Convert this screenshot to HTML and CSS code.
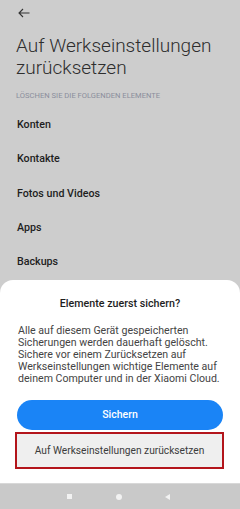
FILE: index.html
```html
<!DOCTYPE html>
<html lang="de">
<head>
<meta charset="utf-8">
<link rel="stylesheet" href="styles.css">
</head>
<body>
<div class="screen">
  <div class="main">
    <div class="topbar">
      <svg class="back" width="12" height="10" viewBox="0 0 12 10"><path d="M11.5 5H1M5 1L1 5l4 4" fill="none" stroke="#333" stroke-width="1.1"/></svg>
    </div>
    <h1 class="title">Auf Werkseinstellungen zurücksetzen</h1>
    <div class="subhead">LÖSCHEN SIE DIE FOLGENDEN ELEMENTE</div>
    <ul class="list">
      <li class="item">Konten</li>
      <li class="item">Kontakte</li>
      <li class="item">Fotos und Videos</li>
      <li class="item">Apps</li>
      <li class="item">Backups</li>
    </ul>
  </div>
  <div class="sheet">
    <div class="sheet-title">Elemente zuerst sichern?</div>
    <p class="sheet-body">Alle auf diesem Gerät gespeicherten Sicherungen werden dauerhaft gelöscht. Sichere vor einem Zurücksetzen auf Werkseinstellungen wichtige Elemente auf deinem Computer und in der Xiaomi Cloud.</p>
    <button class="btn-primary">Sichern</button>
    <div class="highlight">
      <button class="btn-secondary">Auf Werkseinstellungen zurücksetzen</button>
    </div>
  </div>
  <div class="navbar">
    <span class="nav-square"></span>
    <span class="nav-circle"></span>
    <span class="nav-back"></span>
  </div>
</div>
</body>
</html>
```
FILE: styles.css
```css
* { box-sizing: border-box; }
html, body { margin: 0; padding: 0; }
body { width: 240px; height: 509px; overflow: hidden; font-family: Roboto, "Noto Sans", sans-serif; }
.screen { width: 240px; height: 509px; display: flex; flex-direction: column; background: #cdcdcd; }
.main { flex: 1; overflow: hidden; padding: 0 16px; }
.topbar { height: 35px; padding-top: 8px; padding-left: 2px; }
.back { display: block; }
.title { margin: 0; font-size: 19px; line-height: 22px; font-weight: 300; color: #2e2e2e; }
.subhead { margin-top: 12px; font-size: 7.6px; line-height: 10px; color: #8b8e9c; }
.list { list-style: none; margin: 7px 0 0; padding: 0; }
.item { height: 34.3px; line-height: 34.3px; font-size: 10.7px; font-weight: 500; color: #1e1e1e; padding-left: 1px; }
.sheet { height: 203px; background: #fff; border-radius: 13px 13px 0 0; padding: 17px 16px 0; display: flex; flex-direction: column; align-items: stretch; }
.sheet-title { text-align: center; font-size: 10.7px; line-height: 14px; font-weight: 500; color: #1e1e1e; }
.sheet-body { margin: 14px -6px 0 0; padding: 0 0 0 2px; font-size: 10.6px; line-height: 11.9px; color: #444; }
.btn-primary { margin: 15px 1px 0; height: 30px; border: 0; border-radius: 15px; background: #1a84f6; color: #fff; font-family: inherit; font-size: 10.5px; font-weight: 500; }
.highlight { margin: 2px 0 0 -1px; border: 2.5px solid #b3151b; height: 37px; width: 209px; }
.btn-secondary { display: block; width: 100%; height: 100%; border: 0; background: #efefef; color: #3c3c3c; font-family: inherit; font-size: 10.2px; }
.navbar { height: 26px; background: #c9c9c9; border-top: 1px solid #d8d8d8; display: flex; align-items: center; padding-left: 67px; }
.nav-square { width: 5px; height: 5px; background: #f2f2f2; }
.nav-circle { width: 6px; height: 6px; border-radius: 50%; background: #f2f2f2; margin-left: 44px; }
.nav-back { width: 0; height: 0; border-top: 3px solid transparent; border-bottom: 3px solid transparent; border-right: 5px solid #f2f2f2; margin-left: 43px; }
```
